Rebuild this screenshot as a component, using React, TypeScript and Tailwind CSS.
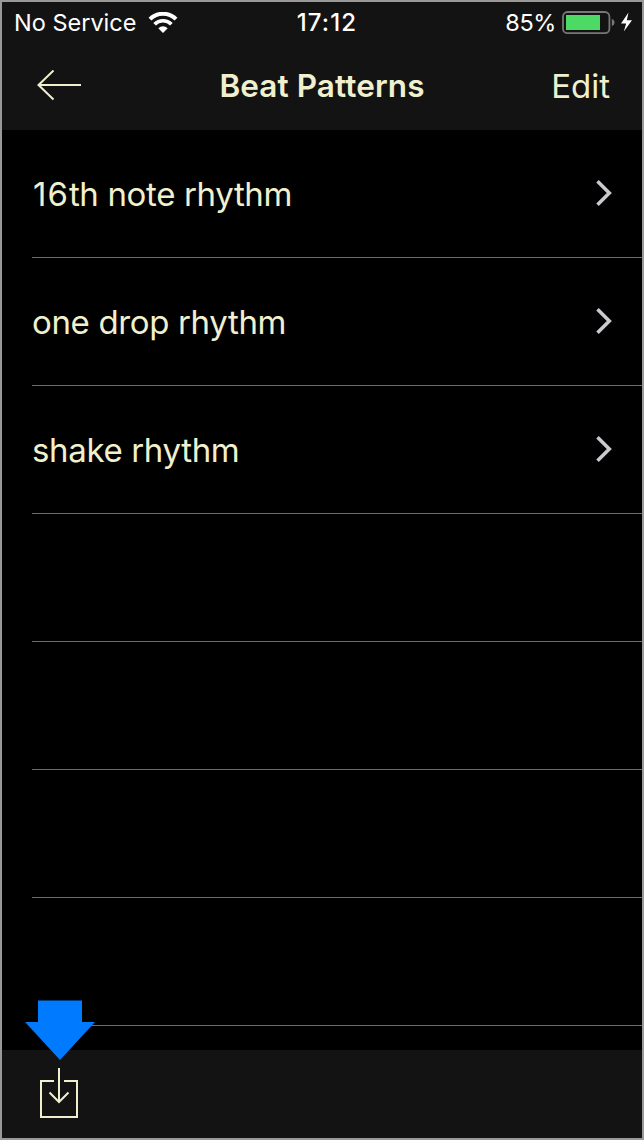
const patterns = [
  { digits: '16', name: 'th note rhythm' },
  { name: 'one drop rhythm' },
  { name: 'shake rhythm' },
  {},
  {},
  {},
  {},
];

function StatusBar() {
  return (
    <div className="grid h-[42px] grid-cols-[1fr_auto_1fr] items-center text-[24px] leading-[42px] text-white">
      <div className="flex items-center pl-[12px]">
        <span className="text-[23.5px]">No Service</span>
        <svg className="ml-[12px] h-[22px] w-[30px]" viewBox="0 0 30 22" fill="none" stroke="#fff">
          <path d="M2 7.1 A18.5 18.5 0 0 1 28 7.1" strokeWidth="4.1" />
          <path d="M6.6 12.2 A12 12 0 0 1 23.4 12.2" strokeWidth="3.7" />
          <path d="M10.3 16.2 Q15 12.4 19.7 16.2 L15 21 Z" fill="#fff" stroke="none" />
        </svg>
      </div>
      <span className="pl-[10px] text-[24px] font-medium tracking-[1.1px]">17:12</span>
      <div className="flex items-center justify-end pr-[6px]">
        <span className="text-[23.5px] tracking-[-0.4px]">85%</span>
        <svg className="ml-[6px] h-[24px] w-[74px]" viewBox="0 0 74 24">
          <rect x="1" y="1" width="46.4" height="21.2" rx="4.5" fill="none" stroke="#777" strokeWidth="1.8" />
          <rect x="4" y="4" width="34" height="15" fill="#4cd964" />
          <path d="M49.8 8 Q52.5 8.7 52.5 11.5 Q52.5 14.3 49.8 15 Z" fill="#777" />
          <path d="M66.5 1.5 L59 12.5 H64.2 L61.8 20.5 L70 9.3 H64.8 Z" fill="#fff" />
        </svg>
      </div>
    </div>
  );
}

function NavBar() {
  return (
    <div className="grid h-[84px] grid-cols-[1fr_auto_1fr] items-center text-[#f0f0cf]">
      <svg className="ml-[34px] h-[32px] w-[46px]" viewBox="0 0 46 32" fill="none" stroke="#f0f0cf" strokeWidth="2">
        <path d="M45 15 H2 M17.5 0.5 L2.5 15 L17.5 29.5" />
      </svg>
      <h1 className="text-[31.5px] leading-[40px] font-semibold tracking-[0.1px]">Beat Patterns</h1>
      <button className="justify-self-end pr-[32px] text-[33px] leading-[40px]">Edit</button>
    </div>
  );
}

function Row({ digits, name }: { digits?: string; name?: string }) {
  return (
    <li className="flex h-[128px] shrink-0 items-center justify-between border-b border-[#6d6d6f] pr-[29px]">
      <span className="text-[33px] leading-[40px] tracking-[-0.35px]">
        {digits && <span className="pl-px tracking-[1px]">{digits}</span>}
        {name}
      </span>
      {name && (
        <svg className="mb-[2px] h-[28px] w-[18px]" viewBox="0 0 18 28" fill="none" stroke="#c9c9ce" strokeWidth="3.6">
          <path d="M2.5 2.2 L14.3 14 L2.5 25.8" />
        </svg>
      )}
    </li>
  );
}

export default function App() {
  return (
    <div className="flex h-[1140px] w-[644px] flex-col border-2 border-[#999] bg-black font-['Inter',sans-serif]">
      <header className="h-[128px] shrink-0 bg-[#131313]">
        <StatusBar />
        <NavBar />
      </header>
      <ul className="flex min-h-0 flex-1 flex-col overflow-hidden pl-[30px] text-[#f0f0cf]">
        {patterns.map((pattern, i) => (
          <Row key={i} {...pattern} />
        ))}
      </ul>
      <footer className="relative h-[88px] shrink-0 bg-[#131313] pt-[17px] pl-[36px]">
        <svg className="absolute -top-[50px] left-[22px] h-[60px] w-[72px]" viewBox="0 0 72 60" fill="#007aff">
          <path d="M14 0.5 H58 V22 H71 L36 60 L1 22 H14 Z" />
        </svg>
        <svg className="h-[52px] w-[42px]" viewBox="0 0 42 52" fill="none" stroke="#f0f0cf" strokeWidth="2">
          <path d="M16 14 H3 V50 H39 V14 H26 M21 1 V35 M11.5 25.5 L21 35 L30.5 25.5" />
        </svg>
      </footer>
    </div>
  );
}
